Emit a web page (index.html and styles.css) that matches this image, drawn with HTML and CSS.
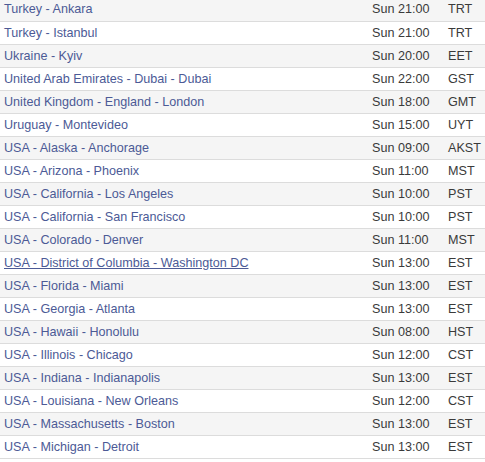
FILE: index.html
```html
<!DOCTYPE html>
<html>
<head>
<meta charset="utf-8">
<link rel="stylesheet" href="styles.css">
</head>
<body>
<table class="zones">
<tbody>
<tr><td class="place"><a href="#">Turkey - Ankara</a></td><td class="time">Sun 21:00</td><td class="tz">TRT</td></tr>
<tr><td class="place"><a href="#">Turkey - Istanbul</a></td><td class="time">Sun 21:00</td><td class="tz">TRT</td></tr>
<tr><td class="place"><a href="#">Ukraine - Kyiv</a></td><td class="time">Sun 20:00</td><td class="tz">EET</td></tr>
<tr><td class="place"><a href="#">United Arab Emirates - Dubai - Dubai</a></td><td class="time">Sun 22:00</td><td class="tz">GST</td></tr>
<tr><td class="place"><a href="#">United Kingdom - England - London</a></td><td class="time">Sun 18:00</td><td class="tz">GMT</td></tr>
<tr><td class="place"><a href="#">Uruguay - Montevideo</a></td><td class="time">Sun 15:00</td><td class="tz">UYT</td></tr>
<tr><td class="place"><a href="#">USA - Alaska - Anchorage</a></td><td class="time">Sun 09:00</td><td class="tz">AKST</td></tr>
<tr><td class="place"><a href="#">USA - Arizona - Phoenix</a></td><td class="time">Sun 11:00</td><td class="tz">MST</td></tr>
<tr><td class="place"><a href="#">USA - California - Los Angeles</a></td><td class="time">Sun 10:00</td><td class="tz">PST</td></tr>
<tr><td class="place"><a href="#">USA - California - San Francisco</a></td><td class="time">Sun 10:00</td><td class="tz">PST</td></tr>
<tr><td class="place"><a href="#">USA - Colorado - Denver</a></td><td class="time">Sun 11:00</td><td class="tz">MST</td></tr>
<tr><td class="place"><a href="#" class="hover">USA - District of Columbia - Washington DC</a></td><td class="time">Sun 13:00</td><td class="tz">EST</td></tr>
<tr><td class="place"><a href="#">USA - Florida - Miami</a></td><td class="time">Sun 13:00</td><td class="tz">EST</td></tr>
<tr><td class="place"><a href="#">USA - Georgia - Atlanta</a></td><td class="time">Sun 13:00</td><td class="tz">EST</td></tr>
<tr><td class="place"><a href="#">USA - Hawaii - Honolulu</a></td><td class="time">Sun 08:00</td><td class="tz">HST</td></tr>
<tr><td class="place"><a href="#">USA - Illinois - Chicago</a></td><td class="time">Sun 12:00</td><td class="tz">CST</td></tr>
<tr><td class="place"><a href="#">USA - Indiana - Indianapolis</a></td><td class="time">Sun 13:00</td><td class="tz">EST</td></tr>
<tr><td class="place"><a href="#">USA - Louisiana - New Orleans</a></td><td class="time">Sun 12:00</td><td class="tz">CST</td></tr>
<tr><td class="place"><a href="#">USA - Massachusetts - Boston</a></td><td class="time">Sun 13:00</td><td class="tz">EST</td></tr>
<tr><td class="place"><a href="#">USA - Michigan - Detroit</a></td><td class="time">Sun 13:00</td><td class="tz">EST</td></tr>
</tbody>
</table>
</body>
</html>
```
FILE: styles.css
```css
html, body {
  margin: 0;
  padding: 0;
  background: #fff;
}
body {
  font-family: "Liberation Sans", Arial, sans-serif;
  font-size: 12.6px;
  color: #3a3a3a;
}
.zones {
  width: 485px;
  border-collapse: collapse;
  margin-top: -2px;
}
.zones tr {
  height: 23px;
}
.zones tr:nth-child(odd) {
  background: #f5f5f5;
}
.zones td {
  padding: 0 4px;
  border-bottom: 1px solid #dcdcdc;
  line-height: 22px;
  white-space: nowrap;
}
.place a {
  color: #4c5a96;
  text-decoration: none;
}
.place a.hover {
  text-decoration: underline;
}
.time {
  width: 68px;
}
.tz {
  width: 33px;
  padding-left: 2px;
}
```
